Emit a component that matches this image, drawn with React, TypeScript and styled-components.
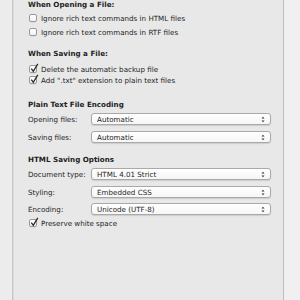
import React from "react";
import styled, { createGlobalStyle } from "styled-components";

const GlobalStyle = createGlobalStyle`
  html, body {
    margin: 0;
    padding: 0;
    width: 300px;
    height: 300px;
    overflow: hidden;
    background: #efefef;
  }
`;

const Window = styled.div`
  display: flex;
  width: 300px;
  height: 300px;
  font-family: "DejaVu Sans", "Liberation Sans", sans-serif;
  font-size: 7.15px;
  color: #1e1e1e;
`;

const SideStrip = styled.div<{ side: "left" | "right" }>`
  width: ${({ side }) => (side === "left" ? "12px" : "16px")};
  background: ${({ side }) => (side === "left" ? "#ececec" : "#f0f0f0")};
  border-right: ${({ side }) => (side === "left" ? "1px solid #c8c8c8" : "none")};
  box-shadow: ${({ side }) => (side === "left" ? "1px 0 0 #dadada" : "none")};
`;

const Panel = styled.div`
  flex: 1;
  background: #e8e8e8;
  border-right: 1px solid #bdbdbd;
  box-shadow: 1px 0 0 #fafafa;
  padding: 0 0 0 14px;
  margin-left: 1px;
`;

const Section = styled.div<{ gap?: number }>`
  display: flex;
  flex-direction: column;
  margin-top: ${({ gap }) => gap ?? 0}px;
`;

const Heading = styled.div`
  font-weight: bold;
  line-height: 9px;
  height: 9px;
`;

const CheckRow = styled.label<{ top: number }>`
  display: flex;
  align-items: center;
  gap: 4px;
  height: 8px;
  margin-top: ${({ top }) => top}px;
  padding-left: 1px;
`;

const Box = styled.span`
  position: relative;
  width: 6px;
  height: 6px;
  border: 1px solid #9a9a9a;
  border-radius: 2px;
  background: linear-gradient(#ffffff, #f2f2f2);
  box-shadow: 0 0.5px 0 rgba(0, 0, 0, 0.1);
  flex: none;
`;

const Tick = styled.svg`
  position: absolute;
  left: 0px;
  top: -3px;
  width: 9px;
  height: 10px;
`;

const FieldRow = styled.div<{ top: number }>`
  display: flex;
  align-items: center;
  height: 12px;
  margin-top: ${({ top }) => top}px;
`;

const FieldLabel = styled.div`
  width: 63px;
  flex: none;
`;

const Popup = styled.div`
  position: relative;
  width: 180px;
  height: 12px;
  box-sizing: border-box;
  border: 1px solid #a9a9a9;
  border-radius: 3px;
  background: linear-gradient(#ffffff, #f6f6f6);
  box-shadow: 0 1px 1px rgba(0, 0, 0, 0.12);
  display: flex;
  align-items: center;
  padding-left: 5px;
`;

const Arrows = styled.svg`
  position: absolute;
  right: 5px;
  top: 2px;
  width: 4px;
  height: 7px;
`;

function Check({ checked, label, top }: { checked?: boolean; label: string; top: number }) {
  return (
    <CheckRow top={top}>
      <Box>
        {checked && (
          <Tick viewBox="0 0 9 10">
            <path d="M1.3 5.6 L3.3 8.4 L7.8 0.8" fill="none" stroke="#2a2a2a" strokeWidth="1.3" />
          </Tick>
        )}
      </Box>
      <span>{label}</span>
    </CheckRow>
  );
}

function Select({ label, value, top }: { label: string; value: string; top: number }) {
  return (
    <FieldRow top={top}>
      <FieldLabel>{label}</FieldLabel>
      <Popup>
        {value}
        <Arrows viewBox="0 0 4 7">
          <path d="M0.5 2.6 L2 0.8 L3.5 2.6 Z M0.5 4.4 L2 6.2 L3.5 4.4 Z" fill="#333" />
        </Arrows>
      </Popup>
    </FieldRow>
  );
}

export default function App() {
  return (
    <>
      <GlobalStyle />
      <Window>
        <SideStrip side="left" />
        <Panel>
          <Section>
            <Heading>When Opening a File:</Heading>
            <Check label="Ignore rich text commands in HTML files" top={5} />
            <Check label="Ignore rich text commands in RTF files" top={6} />
          </Section>
          <Section gap={13}>
            <Heading>When Saving a File:</Heading>
            <Check checked label="Delete the automatic backup file" top={7} />
            <Check checked label={'Add ".txt" extension to plain text files'} top={3} />
          </Section>
          <Section gap={16}>
            <Heading>Plain Text File Encoding</Heading>
            <Select label="Opening files:" value="Automatic" top={4} />
            <Select label="Saving files:" value="Automatic" top={6} />
          </Section>
          <Section gap={12}>
            <Heading>HTML Saving Options</Heading>
            <Select label="Document type:" value="HTML 4.01 Strict" top={4} />
            <Select label="Styling:" value="Embedded CSS" top={6} />
            <Select label="Encoding:" value="Unicode (UTF-8)" top={5} />
            <Check checked label="Preserve white space" top={4} />
          </Section>
        </Panel>
        <SideStrip side="right" />
      </Window>
    </>
  );
}
